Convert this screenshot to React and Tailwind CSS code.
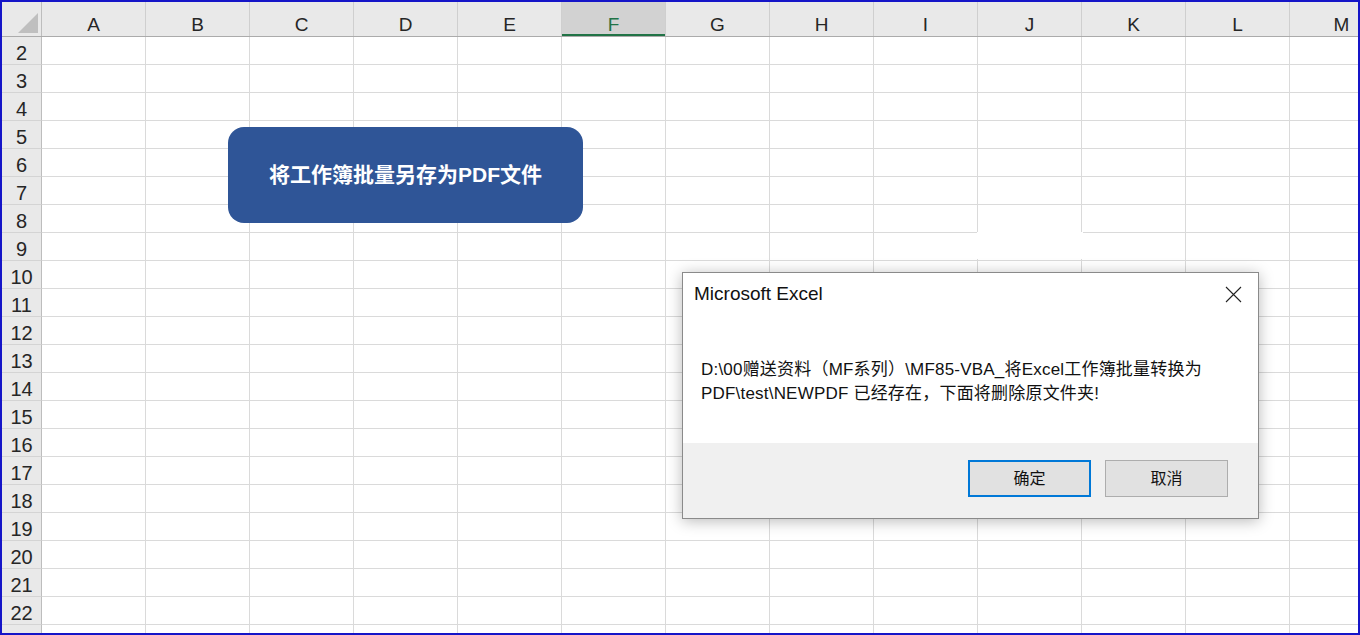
import React from "react";

// Column letters shown across the sheet header
const columns = ["A", "B", "C", "D", "E", "F", "G", "H", "I", "J", "K", "L", "M"];
// Row 1 is scrolled away, sheet starts at row 2
const rows = Array.from({ length: 22 }, (_, i) => i + 2);

const latin = { fontFamily: '"Liberation Sans", Arial, sans-serif' };
const cjk = { fontFamily: '"Liberation Sans", "Noto Sans CJK SC", sans-serif' };

const HeaderRow = () => (
  <div className="flex h-[35px] shrink-0 border-b border-[#ababab] bg-[#e9e9e9]">
    {/* corner cell with the select-all triangle */}
    <div className="relative w-[40px] shrink-0 border-r border-[#bdbdbd]">
      <svg width="22" height="22" viewBox="0 0 22 22" className="absolute right-[2px] bottom-[2px]">
        <polygon points="21,1 21,21 1,21" fill="#bfbfbf" />
      </svg>
    </div>
    {columns.map((c) => (
      <div
        key={c}
        className={
          c === "F"
            ? "flex w-[104px] shrink-0 items-center justify-center border-r border-[#cfcfcf] bg-[#d2d2d2] pt-[10px] text-[19px] leading-none text-[#217346] shadow-[inset_0_-2px_0_#217346]"
            : "flex w-[104px] shrink-0 items-center justify-center border-r border-[#cfcfcf] pt-[10px] text-[19px] leading-none text-[#262626]"
        }
        style={latin}
      >
        {c}
      </div>
    ))}
  </div>
);

const SheetRow = ({ n }) => (
  <div className="flex h-[28px] shrink-0">
    <div
      className="flex w-[40px] shrink-0 items-center justify-center border-r border-b border-r-[#bdbdbd] border-b-[#d4d4d4] bg-[#e9e9e9] pt-[4px] text-[20px] leading-none text-[#262626]"
      style={latin}
    >
      {n}
    </div>
    {columns.map((c) => (
      <div key={c} className="w-[104px] shrink-0 border-r border-b border-[#dadada] bg-white" />
    ))}
  </div>
);

const MessageBox = () => (
  <div className="absolute left-[680px] top-[270px] flex h-[247px] w-[577px] flex-col border border-[#8a8a8a] bg-white shadow-[0_2px_14px_rgba(0,0,0,0.28)]">
    <div className="flex h-[47px] items-center justify-between pb-[4px] pl-[11px] pr-[16px]">
      <span className="text-[19px] text-[#111]" style={latin}>
        Microsoft Excel
      </span>
      <svg width="17" height="17" viewBox="0 0 17 17">
        <path d="M1 1 L16 16 M16 1 L1 16" stroke="#222" strokeWidth="1.1" />
      </svg>
    </div>
    <div
      className="flex flex-1 flex-col justify-center pl-[18px] text-[17px] leading-[24px] tracking-[0.2px] text-[#111]"
      style={cjk}
    >
      <div className="whitespace-nowrap">D:\00赠送资料（MF系列）\MF85-VBA_将Excel工作簿批量转换为</div>
      <div className="whitespace-nowrap">PDF\test\NEWPDF 已经存在，下面将删除原文件夹!</div>
    </div>
    <div className="flex h-[75px] items-start justify-end gap-[14px] bg-[#f0f0f0] pr-[30px] pt-[17px]">
      <button
        className="flex h-[37px] w-[123px] items-center justify-center border-2 border-[#0078d7] bg-[#e1e1e1] text-[16px] text-[#111]"
        style={cjk}
      >
        确定
      </button>
      <button
        className="flex h-[37px] w-[123px] items-center justify-center border border-[#adadad] bg-[#e1e1e1] text-[16px] text-[#111]"
        style={cjk}
      >
        取消
      </button>
    </div>
  </div>
);

export default function App() {
  return (
    <div className="relative h-[635px] w-[1360px] overflow-hidden border-2 border-[#1515c8] bg-white">
      <div className="flex flex-col">
        <HeaderRow />
        {rows.map((n) => (
          <SheetRow key={n} n={n} />
        ))}
      </div>

      {/* macro button shape */}
      <div
        className="absolute left-[226px] top-[125px] flex h-[96px] w-[355px] items-center justify-center rounded-[16px] bg-[#2f5597] text-[21px] font-bold text-white"
        style={cjk}
      >
        将工作簿批量另存为PDF文件
      </div>

      {/* repaint leftover above the dialog */}
      <div className="absolute left-[975px] top-[230px] h-[27px] w-[106px] bg-white" />

      <MessageBox />
    </div>
  );
}
